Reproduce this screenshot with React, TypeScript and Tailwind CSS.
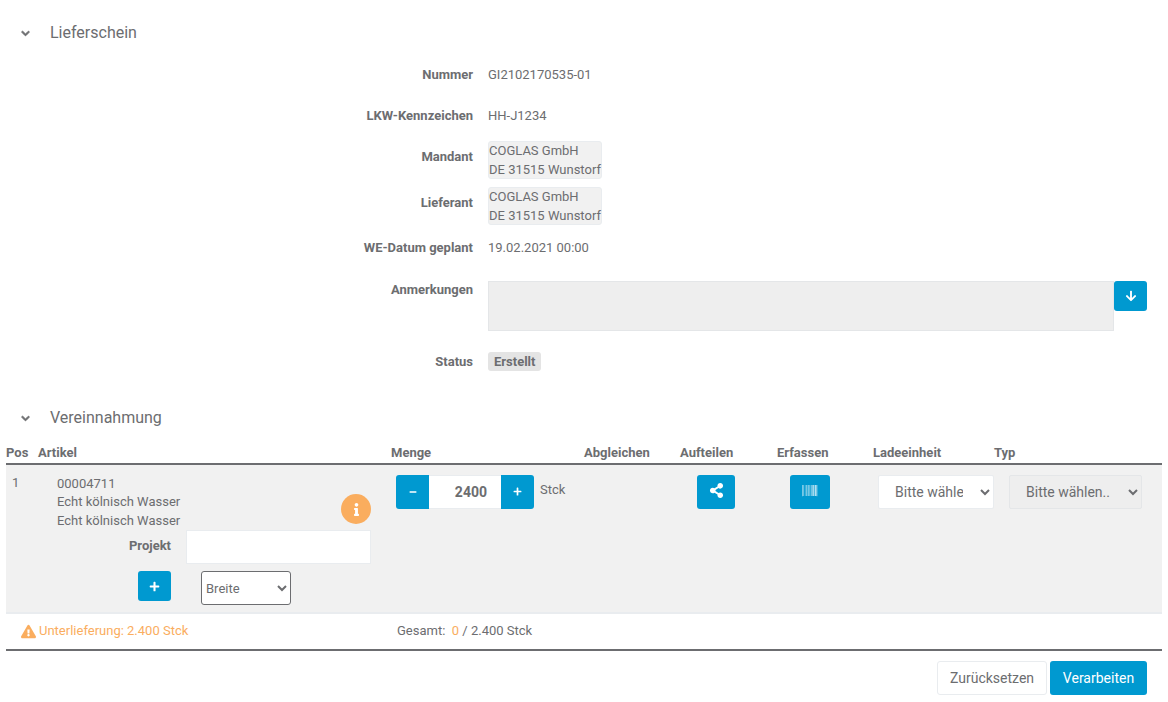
import { FaArrowDown, FaBarcode, FaChevronDown, FaExclamationTriangle, FaInfo, FaMinus, FaPlus, FaShareAlt } from "react-icons/fa";

function Section({ title }: { title: string }) {
  return (
    <div className="flex items-center h-[24px] pl-[21px] text-[#6c6d70]">
      <FaChevronDown className="w-[9px] h-[9px] stroke-[50px]" />
      <span className="ml-[20px] text-[16px]">{title}</span>
    </div>
  );
}

function Row({ label, className, labelClass, children }: { label: string; className: string; labelClass?: string; children: React.ReactNode }) {
  return (
    <div className={"flex " + className}>
      <div className={"w-[473px] shrink-0 text-right font-bold text-[#6c6d70] " + (labelClass ?? "")}>{label}</div>
      <div className="ml-[15px] flex-1 min-w-0">{children}</div>
    </div>
  );
}

function Address() {
  return (
    <div className="w-[114px] h-[38px] mt-[4px] bg-[#f1f1f1] border border-[#e9ecef] rounded-[3px] leading-[18.5px] text-[#6c6d70] whitespace-nowrap">
      COGLAS GmbH
      <br />
      DE 31515 Wunstorf
    </div>
  );
}

function Head({ className, children }: { className: string; children?: React.ReactNode }) {
  return <div className={"shrink-0 font-bold " + className}>{children}</div>;
}

export default function App() {
  return (
    <div className="w-[1168px] h-[702px] overflow-hidden bg-white text-[13px] text-[#6c6d70] [font-family:Roboto,sans-serif]">
      <div className="h-[21px]" />
      <Section title="Lieferschein" />
      <div className="pt-[20px]">
        <Row label="Nummer" className="h-[41px] items-start"><span>GI2102170535-01</span></Row>
        <Row label="LKW-Kennzeichen" className="h-[31px] items-start"><span>HH-J1234</span></Row>
        <Row label="Mandant" className="h-[46px] items-start" labelClass="pt-[10px]"><Address /></Row>
        <Row label="Lieferant" className="h-[46px] items-start" labelClass="pt-[10px]"><Address /></Row>
        <Row label="WE-Datum geplant" className="h-[46px] items-start" labelClass="pt-[9px]"><div className="pt-[9px]">19.02.2021 00:00</div></Row>
        <Row label="Anmerkungen" className="h-[50px] mt-[6px]" labelClass="-mt-[1px]">
          <div className="flex items-start pr-[21px]">
            <div className="h-[50px] flex-1 bg-[#eeeeee] border border-[#e4e6e8]" />
            <button className="w-[33px] h-[30px] rounded-[3px] bg-[#0099d0] text-white flex items-center justify-center">
              <FaArrowDown className="w-[12px] h-[12px]" />
            </button>
          </div>
        </Row>
        <Row label="Status" className="h-[19px] mt-[21px] items-center">
          <span className="inline-flex items-center h-[19px] px-[6px] rounded-[3px] bg-[#e4e4e4] font-bold">Erstellt</span>
        </Row>
      </div>

      <div className="h-[35px]" />
      <Section title="Vereinnahmung" />

      <div className="mx-[6px] w-[1156px] mt-[11px]">
        <div className="flex h-[22px] items-center pt-[1px]">
          <Head className="w-[32px]">Pos</Head>
          <Head className="w-[353px]">Artikel</Head>
          <Head className="w-[193px]">Menge</Head>
          <Head className="w-[96px]">Abgleichen</Head>
          <Head className="w-[97px]">Aufteilen</Head>
          <Head className="w-[96px]">Erfassen</Head>
          <Head className="w-[121px]">Ladeeinheit</Head>
          <Head className="w-[60px]">Typ</Head>
        </div>
        <div className="h-[2px] bg-[#6c6d70]" />
        <div className="flex h-[149px] bg-[#f1f1f1] border-b-2 border-[#e9ecef]">
          <div className="w-[32px] shrink-0 pl-[6px] pt-[9px] leading-[18.5px]">1</div>
          <div className="w-[333px] shrink-0 pt-[9px]">
            <div className="flex items-end justify-between h-[56px] pl-[19px]">
              <div className="leading-[18.5px]">
                00004711
                <br />
                Echt kölnisch Wasser
                <br />
                Echt kölnisch Wasser
              </div>
              <div className="w-[30px] h-[30px] mb-[6px] rounded-full bg-[#faad5e] text-white flex items-center justify-center">
                <FaInfo className="w-[13px] h-[13px]" />
              </div>
            </div>
            <div className="flex items-center">
              <div className="w-[133px] text-right font-bold pb-[3px]">Projekt</div>
              <input className="ml-[15px] w-[185px] h-[34px] bg-white border border-[#e9ecef]" />
            </div>
            <div className="flex items-start mt-[7px]">
              <button className="ml-[100px] w-[33px] h-[30px] rounded-[3px] bg-[#0099d0] text-white flex items-center justify-center">
                <FaPlus className="w-[11px] h-[11px]" />
              </button>
              <select defaultValue="Breite" className="ml-[30px] w-[90px] h-[34px] text-[13px] bg-white border border-[#6c6d70] rounded-[3px] text-[#6c6d70]">
                <option>Breite</option>
              </select>
            </div>
          </div>
          <div className="w-[25px] shrink-0" />
          <div className="w-[339px] shrink-0 pt-[10px] flex items-start">
            <div className="flex h-[34px] items-stretch">
              <button className="w-[33px] rounded-l-[3px] bg-[#0099d0] text-white flex items-center justify-center"><FaMinus className="w-[8px] h-[8px] mb-[1px]" /></button>
              <div className="w-[72px] bg-white border-y border-[#e9ecef] flex items-center justify-end pr-[14px] font-bold text-[14px]">2400</div>
              <button className="w-[33px] rounded-r-[3px] bg-[#0099d0] text-white flex items-center justify-center"><FaPlus className="w-[9px] h-[9px] mb-[1px]" /></button>
            </div>
            <span className="ml-[6px] mt-[6px] leading-[18.5px]">Stck</span>
            <button className="ml-[132px] w-[38px] h-[34px] rounded-[3px] bg-[#0099d0] text-white flex items-center justify-center"><FaShareAlt className="w-[15px] h-[15px] mb-[3px]" /></button>
          </div>
          <div className="pl-[55px] shrink-0 pt-[10px]">
            <button className="w-[40px] h-[34px] rounded-[3px] bg-[#0099d0] text-white flex items-center justify-center"><FaBarcode className="w-[15.5px] h-[15px] mb-[3px] opacity-90" /></button>
          </div>
          <div className="shrink-0 pl-[48px] pt-[10px] flex items-start">
            <select defaultValue="x" className="w-[116px] h-[34px] pl-[12px] pr-[14px] text-[14px] bg-white border border-[#e9ecef] rounded-[2px]">
              <option value="x">Bitte wählen..</option>
            </select>
            <select disabled defaultValue="x" className="ml-[15px] w-[133px] h-[34px] pl-[12px] text-[14px] bg-[#eeeeee] border border-[#e4e6e8] rounded-[2px] text-[#6c6d70] opacity-100">
              <option value="x">Bitte wählen..</option>
            </select>
          </div>
        </div>
        <div className="flex items-center h-[37px] pb-[1px] border-b-2 border-[#6c6d70]">
          <div className="w-[391px] shrink-0 pl-[15px] flex items-center text-[#faad5e]">
            <FaExclamationTriangle className="w-[15px] h-[15px] mr-[3px]" />
            <span>Unterlieferung: 2.400 Stck</span>
          </div>
          <span>Gesamt:&nbsp; <span className="text-[#faad5e]">0</span> / 2.400 Stck</span>
        </div>
      </div>

      <div className="flex justify-end gap-[3px] pr-[21px] mt-[10px]">
        <button className="w-[110px] h-[34px] rounded-[3px] bg-white border border-[#e9ecef] text-[14px] text-[#6c6d70]">Zurücksetzen</button>
        <button className="w-[97px] h-[34px] rounded-[3px] bg-[#0099d0] text-white text-[14px] font-normal">Verarbeiten</button>
      </div>
    </div>
  );
}
